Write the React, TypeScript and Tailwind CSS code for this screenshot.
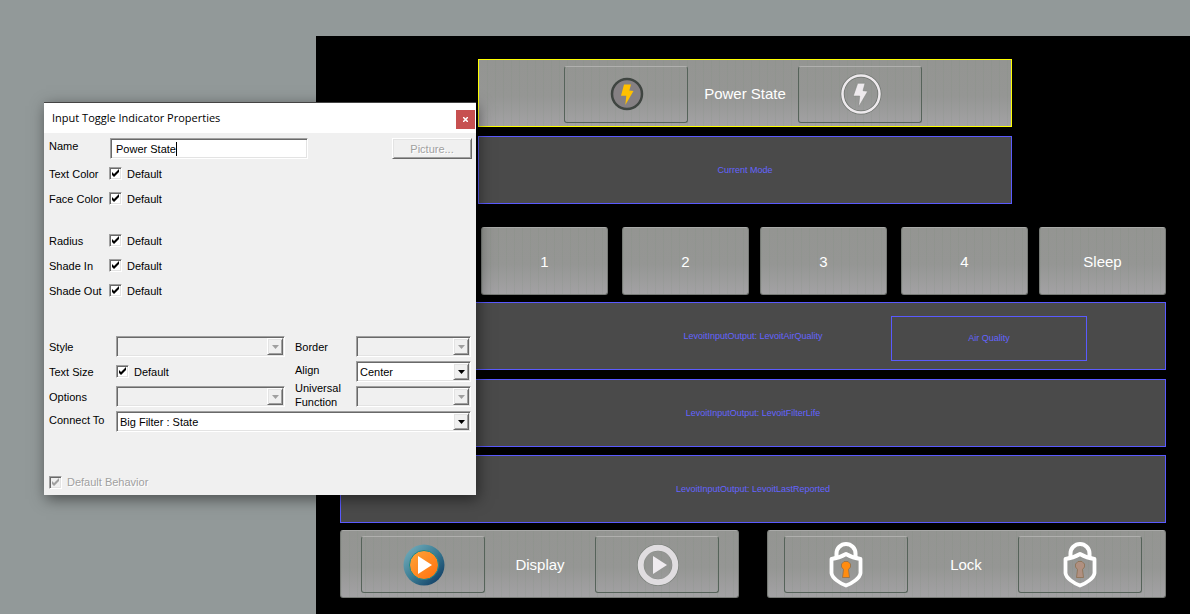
import React from "react";

const sunken =
  "border border-t-[#a0a0a0] border-l-[#a0a0a0] border-b-white border-r-white shadow-[inset_1px_1px_0_#696969,inset_-1px_-1px_0_#e3e3e3]";

const raised =
  "border border-t-white border-l-white border-b-[#696969] border-r-[#696969] shadow-[inset_1px_1px_0_#e3e3e3,inset_-1px_-1px_0_#a0a0a0]";

const metal =
  "bg-[repeating-linear-gradient(90deg,rgba(120,140,120,0.14)_0_1px,transparent_1px_8px),linear-gradient(#949592,#959694_55%,#a3a2a4)]";

interface CheckProps {
  id: string;
  label: string;
  disabled?: boolean;
}

const Check: React.FC<CheckProps> = ({ id, label, disabled }) => (
  <div className="flex items-center gap-[5px]">
    <span className="relative size-[13px]">
      <input
        id={id}
        type="checkbox"
        defaultChecked
        disabled={disabled}
        className={`peer block size-[13px] appearance-none bg-white disabled:bg-[#f0f0f0] ${sunken}`}
      />
      <svg
        viewBox="0 0 13 13"
        className="pointer-events-none absolute inset-0 hidden size-[13px] text-black peer-checked:block peer-disabled:text-[#a0a0a0]"
      >
        <path d="M3 5v3l2 2 5-5V2L5 7z" fill="currentColor" />
      </svg>
    </span>
    <label htmlFor={id} className={disabled ? "text-[#a0a0a0] [text-shadow:1px_1px_0_#fff]" : ""}>
      {label}
    </label>
  </div>
);

interface ComboProps {
  id: string;
  value?: string;
  disabled?: boolean;
}

const Combo: React.FC<ComboProps> = ({ id, value, disabled }) => (
  <div className="relative h-[21px] w-full">
    <select
      id={id}
      disabled={disabled}
      className={`block h-full w-full appearance-none bg-white pl-[3px] text-black opacity-100 disabled:bg-[#f0f0f0] ${sunken}`}
    >
      <option>{value}</option>
    </select>
    <span
      className={`pointer-events-none absolute top-[2px] right-[2px] bottom-[2px] flex w-4 items-center justify-center bg-[#f0f0f0] ${raised}`}
    >
      <svg viewBox="0 0 7 4" className={`h-1 w-[7px] ${disabled ? "text-[#a0a0a0]" : "text-black"}`}>
        <path d="M0 0h7L3.500 4z" fill="currentColor" />
      </svg>
    </span>
  </div>
);

interface CheckRowProps {
  id: string;
  title: string;
}

const CheckRow: React.FC<CheckRowProps> = ({ id, title }) => (
  <div className="flex h-[25px] items-center" role="group" aria-labelledby={`${id}-title`}>
    <span id={`${id}-title`} className="w-[60px]">
      {title}
    </span>
    <Check id={id} label="Default" />
  </div>
);

const PropertiesDialog: React.FC = () => (
  <form
    className="absolute top-[102px] left-11 w-[432px] border-t border-[#444] bg-[#f0f0f0] text-[11px] leading-[14px] text-black shadow-[2px_4px_14px_rgba(0,0,0,0.5)]"
    onSubmit={(e) => e.preventDefault()}
  >
    <div className="flex h-[30px] items-center justify-between bg-white pr-px pl-2">
      <h1 className="font-['Open_Sans',sans-serif] text-[11px]">Input Toggle Indicator Properties</h1>
      <button
        type="button"
        aria-label="Close"
        className="mt-[3px] flex size-[19px] items-center justify-center bg-[#c75050] text-white"
      >
        <svg viewBox="0 0 5 5" className="size-[5px]">
          <path d="M0 0L5 5M5 0L0 5" stroke="currentColor" strokeWidth="1.5" />
        </svg>
      </button>
    </div>

    <div className="pt-[5px] pr-1 pb-1.5 pl-[5px]">
      <div className="flex items-center">
        <label htmlFor="name" className="w-[61px] pb-1.5">
          Name
        </label>
        <div className={`flex h-[21px] w-[198px] items-center bg-white pl-[5px] ${sunken}`}>
          <input
            id="name"
            defaultValue="Power State"
            className="field-sizing-content border-r border-black bg-transparent leading-[14px] outline-none"
          />
        </div>
        <button
          type="button"
          disabled
          className={`ml-auto h-[21px] w-20 text-[#a0a0a0] [text-shadow:1px_1px_0_#fff] ${raised}`}
        >
          Picture...
        </button>
      </div>

      <div className="mt-[2px]">
        <CheckRow id="text-color" title="Text Color" />
        <CheckRow id="face-color" title="Face Color" />
      </div>
      <div className="mt-[17px]">
        <CheckRow id="radius" title="Radius" />
        <CheckRow id="shade-in" title="Shade In" />
        <CheckRow id="shade-out" title="Shade Out" />
      </div>

      <div className="mt-[31px] grid auto-rows-[25px] grid-cols-[67px_169px_71px_1fr] items-center pr-px">
        <label htmlFor="style">Style</label>
        <Combo id="style" disabled />
        <label htmlFor="border" className="pl-2.5">
          Border
        </label>
        <Combo id="border" disabled />

        <span>Text Size</span>
        <Check id="text-size" label="Default" />
        <label htmlFor="align" className="pb-1 pl-2.5">
          Align
        </label>
        <Combo id="align" value="Center" />

        <label htmlFor="options">Options</label>
        <Combo id="options" disabled />
        <label htmlFor="function" className="pb-1 pl-2.5">
          Universal Function
        </label>
        <Combo id="function" disabled />

        <label htmlFor="connect" className="pb-[3px]">
          Connect To
        </label>
        <div className="col-span-3">
          <Combo id="connect" value="Big Filter : State" />
        </div>
      </div>

      <div className="mt-[41px]">
        <Check id="behavior" label="Default Behavior" disabled />
      </div>
    </div>
  </form>
);

const BoltOn = () => (
  <svg viewBox="-21 -21 42 42" className="size-[42px]">
    <circle r="15" fill="#858083" stroke="#3f4541" strokeWidth="2.500" />
    <path d="M-3-9.500H4L2.300-3.500 6.500-3-1.700 11-.7 1.800H-6z" fill="#ffc000" />
  </svg>
);

const BoltOff = () => (
  <svg viewBox="-21 -21 42 42" className="size-[42px]">
    <circle r="18.500" fill="none" stroke="#707570" strokeWidth="4" />
    <circle r="18.500" fill="none" stroke="#eeeaed" strokeWidth="2.500" />
    <path d="M-3.300-10.700H4L2-3.300 6.700-2.700-2.300 12.700-1.300 2H-7.700z" fill="#eeeaed" stroke="#7c807c" strokeWidth="0.500" />
  </svg>
);

const PlayOn = () => (
  <svg viewBox="-21 -21 42 42" className="size-[42px]">
    <defs>
      <linearGradient id="teal" x1="0" y1="0" x2="1" y2="1">
        <stop offset="0.100" stopColor="#6fa9b8" />
        <stop offset="0.500" stopColor="#3a7c94" />
        <stop offset="0.900" stopColor="#123f66" />
      </linearGradient>
      <linearGradient id="orange" x1="0" y1="0" x2="1" y2="1">
        <stop offset="0" stopColor="#ffa63a" />
        <stop offset="1" stopColor="#ff6f0c" />
      </linearGradient>
    </defs>
    <circle r="20.500" fill="url(#teal)" />
    <circle r="14.500" fill="url(#orange)" stroke="#168a90" strokeWidth="1" />
    <path d="M-6-9L8 0-6 9z" fill="#fff" />
  </svg>
);

const PlayOff = () => (
  <svg viewBox="-21 -21 42 42" className="size-[42px]">
    <circle r="17.500" fill="none" stroke="#7b807b" strokeWidth="7" />
    <circle r="17.300" fill="none" stroke="#e0dde0" strokeWidth="6" />
    <path d="M-5-9L9 0-5 9z" fill="#efebef" />
  </svg>
);

const Lock = ({ color }: { color: string }) => (
  <svg viewBox="0 0 46 48" className="h-12 w-[46px]" fill="none">
    <path d="M12.500 17V12.500a9.500 9.500 0 0 1 19 0V17" stroke="#fff" strokeWidth="4" />
    <path
      d="M22 13C17 16 12 17.500 7.500 18V32C8 37 16 42.500 22 44.500 28 42.500 36 37 36.500 32V18C32 17.500 27 16 22 13Z"
      stroke="#fff"
      strokeWidth="3.800"
      strokeLinejoin="round"
    />
    <path
      d="M20 20.500h4l2.500 2.500v3L24.500 28.500l1 8h-7l1-8-2-2.500v-3z"
      fill={color}
      stroke="#8a6a48"
      strokeWidth="0.700"
    />
  </svg>
);

interface ToggleProps {
  label: string;
  on: React.ReactNode;
  off: React.ReactNode;
  className: string;
  labelClass?: string;
}

const Toggle: React.FC<ToggleProps> = ({ label, on, off, className, labelClass = "" }) => {
  const face =
    "flex h-[57px] w-[124px] shrink-0 items-center justify-center rounded-[3px] border border-[#56635a] border-t-[#b0b0ae] pl-px";
  return (
    <div className={`flex h-[68px] items-center justify-center ${metal} ${className}`}>
      <button type="button" aria-label={`${label} on`} className={face}>
        {on}
      </button>
      <span className={`w-[110px] text-center text-[15px] leading-5 text-white ${labelClass}`}>{label}</span>
      <button type="button" aria-label={`${label} off`} className={face}>
        {off}
      </button>
    </div>
  );
};

const Speed = ({ label }: { label: string }) => (
  <button
    type="button"
    className={`h-[68px] w-[127px] rounded-[3px] border border-[#777a76] border-t-[#a9aaa8] pt-0.5 text-[15px] text-white ${metal}`}
  >
    {label}
  </button>
);

interface PanelProps {
  text: string;
  className?: string;
  children?: React.ReactNode;
}

const Panel: React.FC<PanelProps> = ({ text, className = "", children }) => (
  <div
    className={`grid h-[68px] grid-cols-[1fr_auto_1fr] items-center border border-[#5a5aff] bg-[#4a4a4a] text-[9px] leading-3 text-[#6464ff] ${className}`}
  >
    <span className="col-start-2">{text}</span>
    {children}
  </div>
);

export default function App() {
  return (
    <div className="relative flex min-h-screen flex-col bg-[#929999] pt-9 pl-[316px] font-['Liberation_Sans',Arial,sans-serif]">
      <main className="flex-1 bg-black px-6 pt-[23px] pb-4">
        <div className="mr-[154px] ml-[138px]">
          <Toggle
            label="Power State"
            on={<BoltOn />}
            off={<BoltOff />}
            className="border border-[#ffff00] pt-0.5 pr-1"
            labelClass="pl-1"
          />
          <Panel text="Current Mode" className="mt-[9px]" />
        </div>

        <div className="mt-[23px] flex justify-end gap-[11px]">
          <div className="flex gap-3.5">
            <Speed label="1" />
            <Speed label="2" />
          </div>
          <div className="flex gap-3.5">
            <Speed label="3" />
            <Speed label="4" />
          </div>
          <Speed label="Sleep" />
        </div>

        <Panel text="LevoitInputOutput: LevoitAirQuality" className="mt-[7px]">
          <div className="mt-1 mr-[78px] flex h-[45px] w-[196px] items-center justify-center justify-self-end border border-[#5a5aff]">
            Air Quality
          </div>
        </Panel>
        <Panel text="LevoitInputOutput: LevoitFilterLife" className="mt-[9px]" />
        <Panel text="LevoitInputOutput: LevoitLastReported" className="mt-2" />

        <div className="mt-[7px] grid grid-cols-2 gap-7">
          <Toggle
            label="Display"
            on={<PlayOn />}
            off={<PlayOff />}
            className="rounded-[3px] border border-[#777a76] border-t-[#a9aaa8] pt-px pl-px"
          />
          <Toggle
            label="Lock"
            on={<Lock color="#ff8c10" />}
            off={<Lock color="#b09080" />}
            className="rounded-[3px] border border-[#777a76] border-t-[#a9aaa8] pt-px pr-[7px]"
            labelClass="pl-1.5"
          />
        </div>
      </main>

      <PropertiesDialog />
    </div>
  );
}
